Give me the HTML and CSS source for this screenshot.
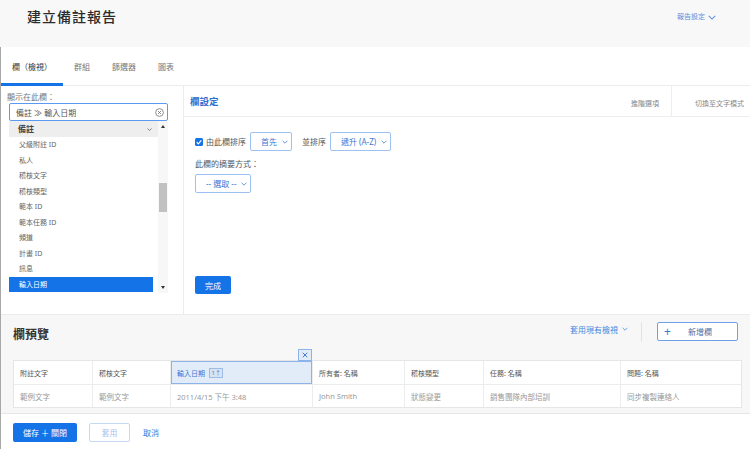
FILE: index.html
```html
<!DOCTYPE html>
<html lang="zh-Hant">
<head>
<meta charset="utf-8">
<title>建立備註報告</title>
<link rel="stylesheet" href="styles.css">
</head>
<body>
<header class="top">
  <h1 class="title">建立備註報告</h1>
  <a class="report-settings">報告設定 <svg class="chev" viewBox="0 0 10 6" width="8" height="5"><path d="M1 1l4 4 4-4" fill="none" stroke="currentColor" stroke-width="1.3"/></svg></a>
</header>
<div class="main">
  <nav class="tabs">
    <span class="tab active">欄（檢視）</span>
    <span class="tab">群組</span>
    <span class="tab">篩選器</span>
    <span class="tab">圖表</span>
  </nav>
  <section class="editor">
    <aside class="fields">
      <div class="fields-label">顯示在此欄：</div>
      <div class="search">
        <span>備註 ≫ 輸入日期</span>
        <svg viewBox="0 0 10 10" width="9" height="9"><circle cx="5" cy="5" r="4.3" fill="none" stroke="#666" stroke-width="0.8"/><path d="M3.3 3.3l3.4 3.4M6.7 3.3l-3.4 3.4" stroke="#666" stroke-width="0.8"/></svg>
      </div>
      <div class="listbox">
        <ul class="list">
          <li class="group"><span>備註</span><svg viewBox="0 0 10 6" width="5" height="3"><path d="M1 1l4 4 4-4" fill="none" stroke="#555" stroke-width="1.4"/></svg></li>
          <li>父級附註 ID</li>
          <li>私人</li>
          <li>稽核文字</li>
          <li>稽核類型</li>
          <li>範本 ID</li>
          <li>範本任務 ID</li>
          <li>頻道</li>
          <li>計畫 ID</li>
          <li>訊息</li>
          <li class="selected">輸入日期</li>
        </ul>
        <div class="scrollbar">
          <span class="arrow up"></span>
          <span class="thumb"></span>
          <span class="arrow down"></span>
        </div>
      </div>
    </aside>
    <div class="settings">
      <div class="settings-head">
        <h2 class="settings-title">欄設定</h2>
        <div class="head-links">
          <a class="adv">進階選項</a>
          <a class="textmode">切換至文字模式</a>
        </div>
      </div>
      <div class="settings-body">
        <div class="row">
          <span class="checkbox"><svg viewBox="0 0 8 8" width="8" height="8"><path d="M1.7 4.2l1.6 1.6 3-3.4" stroke="#fff" fill="none" stroke-width="1.2"/></svg></span>
          <span class="lbl">由此欄排序</span>
          <span class="select s-first">首先 <svg viewBox="0 0 10 6" width="6" height="4"><path d="M1 1l4 4 4-4" fill="none" stroke="currentColor" stroke-width="1.3"/></svg></span>
          <span class="lbl lbl2">並排序</span>
          <span class="select s-asc">遞升 (A-Z) <svg viewBox="0 0 10 6" width="6" height="4"><path d="M1 1l4 4 4-4" fill="none" stroke="currentColor" stroke-width="1.3"/></svg></span>
        </div>
        <div class="sum-label">此欄的摘要方式：</div>
        <span class="select s-pick">-- 選取 -- <svg viewBox="0 0 10 6" width="6" height="4"><path d="M1 1l4 4 4-4" fill="none" stroke="currentColor" stroke-width="1.3"/></svg></span>
        <button class="btn-primary done">完成</button>
      </div>
    </div>
  </section>
  <section class="preview">
    <div class="preview-head">
      <h2 class="preview-title">欄預覽</h2>
      <div class="preview-actions">
        <a class="apply-view">套用現有檢視 <svg viewBox="0 0 10 6" width="6" height="4"><path d="M1 1l4 4 4-4" fill="none" stroke="currentColor" stroke-width="1.3"/></svg></a>
        <span class="vdivider"></span>
        <button class="add-col"><span class="plus">+</span><span class="add-text">新增欄</span></button>
      </div>
    </div>
    <div class="grid">
      <div class="th">附註文字</div>
      <div class="th">稽核文字</div>
      <div class="th sorted">輸入日期 <span class="badge">1↑</span><span class="close-col"><svg viewBox="0 0 8 8" width="6" height="6"><path d="M1 1l6 6M7 1l-6 6" stroke="#2f6fd0" stroke-width="1.2"/></svg></span></div>
      <div class="th">所有者: 名稱</div>
      <div class="th">稽核類型</div>
      <div class="th">任務: 名稱</div>
      <div class="th last">問題: 名稱</div>
      <div class="td">範例文字</div>
      <div class="td">範例文字</div>
      <div class="td">2011/4/15 下午 3:48</div>
      <div class="td">John Smith</div>
      <div class="td">狀態變更</div>
      <div class="td">銷售團隊內部培訓</div>
      <div class="td last">同步複製連絡人</div>
    </div>
  </section>
  <footer class="footer">
    <button class="btn-primary save">儲存 ＋ 關閉</button>
    <button class="btn-apply">套用</button>
    <a class="cancel">取消</a>
  </footer>
</div>
</body>
</html>
```

FILE: styles.css
```css
* { box-sizing: border-box; }
body {
  margin: 0;
  width: 750px;
  height: 449px;
  overflow: hidden;
  background: #fff;
  color: #333;
  font-family: "Noto Sans", "Noto Sans CJK TC", sans-serif;
}
a { cursor: pointer; }
button { font-family: inherit; cursor: pointer; }

.top {
  height: 47px;
  background: #f8f8f8;
  display: flex;
  justify-content: space-between;
  align-items: flex-start;
  padding: 0 34px 0 27px;
}
.title {
  margin: 8px 0 0;
  font-size: 14px;
  line-height: 18px;
  font-weight: 500;
  letter-spacing: 1px;
  color: #2b2b2b;
}
.report-settings {
  margin-top: 12px;
  font-size: 7px;
  line-height: 10px;
  color: #5b8fe0;
  display: flex;
  align-items: center;
  gap: 3px;
}

.main {
  border-left: 1px solid #a8a8a8;
  height: 402px;
  display: flex;
  flex-direction: column;
}

.tabs {
  display: flex;
  height: 39px;
  border-bottom: 1px solid #ececec;
}
.tab {
  display: flex;
  align-items: center;
  padding: 3px 11px 0;
  font-size: 8px;
  color: #777;
  border-bottom: 3px solid transparent;
  margin-bottom: -1px;
}
.tab.active {
  color: #333;
  border-bottom-color: #1473e6;
}

.editor {
  display: flex;
  height: 228px;
}
.fields {
  width: 183px;
  border-right: 1px solid #ececec;
  padding: 6px 0 0 6px;
}
.fields-label {
  font-size: 8px;
  line-height: 10px;
  color: #777;
}
.search {
  margin: 1px 0 0 2px;
  width: 159px;
  height: 18px;
  border: 1px solid #5a9af0;
  border-radius: 2px;
  display: flex;
  align-items: center;
  justify-content: space-between;
  padding: 0 3px 0 6px;
  font-size: 8px;
  color: #555;
}
.listbox {
  margin-left: 2px;
  width: 159px;
  height: 172px;
  display: flex;
}
.list {
  width: 149px;
  margin: 0;
  padding: 0;
  list-style: none;
}
.list li {
  height: 15.5px;
  line-height: 15.5px;
  padding-left: 10px;
  margin-right: 5px;
  font-size: 7px;
  color: #666;
}
.list li.group {
  height: 16px;
  line-height: 16px;
  margin-right: 0;
  padding: 0 6px 0 9px;
  background: #eeeeee;
  font-size: 8px;
  font-weight: 700;
  color: #444;
  display: flex;
  justify-content: space-between;
  align-items: center;
}
.list li.selected {
  background: #1473e6;
  color: #fff;
}
.scrollbar {
  width: 10px;
  background: #f7f7f7;
  display: flex;
  flex-direction: column;
  align-items: center;
}
.arrow {
  width: 0;
  height: 0;
  border-left: 2.5px solid transparent;
  border-right: 2.5px solid transparent;
}
.arrow.up {
  margin-top: 4px;
  border-bottom: 3px solid #333;
}
.arrow.down {
  margin-top: auto;
  margin-bottom: 4px;
  border-top: 3px solid #333;
}
.thumb {
  margin-top: 55px;
  width: 8px;
  height: 29px;
  background: #c1c1c1;
}

.settings {
  flex: 1;
  display: flex;
  flex-direction: column;
}
.settings-head {
  height: 31px;
  border-bottom: 1px solid #eeeeee;
  display: flex;
  justify-content: space-between;
  align-items: stretch;
  padding-left: 6px;
}
.settings-title {
  margin: 0;
  align-self: center;
  font-size: 9.5px;
  font-weight: 700;
  color: #2e6fd0;
}
.head-links {
  display: flex;
  align-items: stretch;
  padding-top: 3px;
}
.head-links a {
  display: flex;
  align-items: center;
  font-size: 7px;
  color: #888;
  margin-top: -3px;
  padding-top: 3px;
}
.adv {
  padding-right: 12px;
  border-right: 1px solid #eeeeee;
}
.textmode {
  padding: 0 6px 0 23px;
}

.settings-body {
  flex: 1;
  display: flex;
  flex-direction: column;
  align-items: flex-start;
  padding: 15px 0 20px 11px;
}
.row {
  display: flex;
  align-items: center;
  height: 19px;
}
.checkbox {
  width: 8px;
  height: 8px;
  border-radius: 1.5px;
  background: #1473e6;
  margin-right: 3px;
  display: flex;
}
.lbl {
  font-size: 8px;
  color: #555;
  margin-right: 4px;
}
.lbl2 { margin-left: 10px; }
.select {
  height: 19px;
  border: 1px solid #9ec1f3;
  border-radius: 2px;
  display: inline-flex;
  align-items: center;
  gap: 5px;
  padding-left: 10px;
  font-size: 8px;
  color: #3c78d8;
  background: #fff;
}
.s-first { width: 42px; }
.s-asc { width: 61px; }
.s-pick { width: 56px; margin-top: 5px; }
.sum-label {
  margin-top: 8px;
  font-size: 8px;
  line-height: 10px;
  color: #555;
}
.btn-primary {
  border: none;
  border-radius: 2px;
  background: #1473e6;
  color: #fff;
  font-size: 8px;
  padding: 0;
}
.done {
  margin-top: auto;
  width: 36px;
  height: 18px;
}

.preview {
  height: 99px;
  border-top: 1px solid #ececec;
  background: #f7f7f7;
  padding: 7px 7px 0 12px;
}
.preview-head {
  display: flex;
  justify-content: space-between;
  align-items: center;
  height: 19px;
  margin-right: 5px;
}
.preview-title {
  margin: 5px 0 0;
  font-size: 12px;
  font-weight: 700;
  color: #333;
}
.preview-actions {
  display: flex;
  align-items: center;
}
.apply-view {
  display: flex;
  align-items: center;
  gap: 4px;
  font-size: 8px;
  color: #4a86e0;
  margin-top: -5px;
}
.vdivider {
  width: 1px;
  height: 20px;
  background: #e3e3e3;
  margin: 0 15px 0 13px;
}
.add-col {
  width: 81px;
  height: 19px;
  border: 1px solid #6fa0ea;
  border-radius: 2px;
  background: #fff;
  display: flex;
  align-items: center;
  padding: 0 0 0 6px;
}
.plus {
  font-size: 12px;
  line-height: 12px;
  color: #3c78d8;
  width: 24px;
  text-align: left;
}
.add-text {
  font-size: 8px;
  color: #4a6da8;
}

.grid {
  margin-top: 19px;
  width: 729px;
  display: grid;
  grid-template-columns: 79px 78px 142px 92px 79px 137px 120px;
  border: 1px solid #e6e6e6;
  background: #fff;
}
.th, .td {
  display: flex;
  align-items: center;
  padding-left: 6px;
  border-right: 1px solid #ececec;
  white-space: nowrap;
}
.th {
  height: 24px;
  border-bottom: 1px solid #ececec;
  font-size: 7px;
  color: #555;
}
.td {
  height: 22px;
  font-size: 7.5px;
  color: #999;
}
.last { border-right: none; }
.th.sorted {
  position: relative;
  background: #e2ecf9;
  box-shadow: inset 0 0 0 1px #8db4ea;
  color: #3a78d8;
}
.badge {
  margin-left: 4px;
  font-size: 6px;
  line-height: 8px;
  padding: 0 1.5px;
  border: 1px solid #9dbce6;
  background: #d5e3f5;
  color: #5a7fb8;
}
.close-col {
  position: absolute;
  right: 0;
  top: -12px;
  width: 14px;
  height: 12px;
  background: #e2ecf9;
  border: 1px solid #8db4ea;
  display: flex;
  align-items: center;
  justify-content: center;
}

.footer {
  flex: 1;
  border-top: 1px solid #e6e6e6;
  display: flex;
  align-items: flex-start;
  padding: 9px 0 0 12px;
}
.save {
  width: 64px;
  height: 19px;
  margin-right: 12px;
}
.btn-apply {
  width: 41px;
  height: 19px;
  margin-right: 13px;
  border: 1px solid #c4d8f4;
  border-radius: 2px;
  background: #fff;
  color: #a8c2ec;
  font-size: 8px;
  padding: 0;
}
.cancel {
  font-size: 8px;
  line-height: 19px;
  color: #3a78d8;
}
```
